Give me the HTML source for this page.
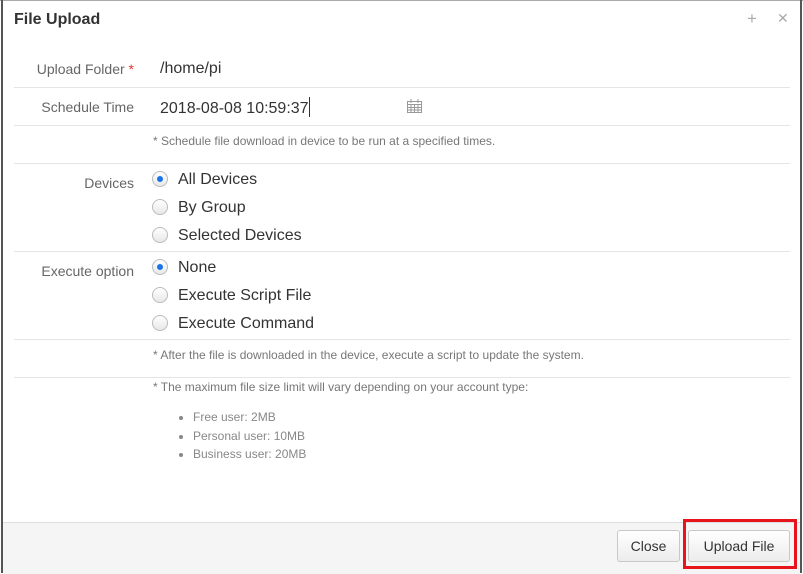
<!DOCTYPE html>
<html><head><style>
body{margin:0;width:803px;height:573px;background:#fff;position:relative;overflow:hidden;font-family:"Liberation Sans",sans-serif}
.a{position:absolute;white-space:nowrap}
.l{position:absolute;right:669px;font-size:14px;color:#666;text-align:right;white-space:nowrap}
.v{position:absolute;left:160px;font-size:16px;color:#333;white-space:nowrap}
.hr{position:absolute;left:14px;width:776px;height:1px;background:#e5e5e5}
.r{position:absolute;left:152px;width:16px;height:16px;border:1px solid #bbb;border-radius:50%;background:linear-gradient(#fff,#e8e8e8);box-sizing:border-box}
.r.on::after{content:"";position:absolute;left:4px;top:4px;width:6px;height:6px;border-radius:50%;background:#1a73e8}
.rt{position:absolute;left:178px;font-size:16px;color:#333;white-space:nowrap}
.n{position:absolute;left:153px;font-size:12px;color:#777;white-space:nowrap}
.li{position:absolute;left:193px;font-size:12px;color:#888;white-space:nowrap}
.li::before{content:"";position:absolute;left:-14px;top:6px;width:4px;height:4px;border-radius:50%;background:#888}
.btn{position:absolute;top:530px;height:32px;border:1px solid #c8c8c8;border-radius:3px;background:linear-gradient(#fff,#ececec);font-size:14px;color:#333;box-sizing:border-box;text-align:center;line-height:30px}
</style></head><body>
<div class="a" style="left:0;top:0;width:803px;height:1px;background:#aaa"></div>
<div class="a" style="left:1px;top:0;width:2px;height:573px;background:#555"></div>
<div class="a" style="left:800px;top:0;width:2px;height:573px;background:#555"></div>
<div class="a" style="left:14px;top:11px;font-size:16px;font-weight:bold;color:#333">File Upload</div>
<div class="a" style="left:747px;top:9px;font-size:17px;color:#aaa">+</div>
<div class="a" style="left:777px;top:10px;font-size:14px;color:#aaa">✕</div>

<div class="l" style="top:61px">Upload Folder <span style="color:#e33">*</span></div>
<div class="v" style="top:60px">/home/pi</div>
<div class="hr" style="top:87px"></div>
<div class="l" style="top:99px">Schedule Time</div>
<div class="v" style="top:97px">2018-08-08 10:59:37<span style="display:inline-block;width:1px;height:20px;background:#333;vertical-align:-4px"></span></div>
<svg class="a" style="left:406px;top:98px" width="17" height="16" viewBox="0 0 17 16"><g fill="none" stroke="#999" stroke-width="1"><rect x="1.5" y="3.5" width="14" height="11"/><path d="M1.5 6.5h14M1.5 9.5h14M1.5 12h14M5 6.5v8M8.5 6.5v8M12 6.5v8M5 1v4M12 1v4"/></g></svg>
<div class="hr" style="top:125px"></div>
<div class="n" style="top:134px">* Schedule file download in device to be run at a specified times.</div>
<div class="hr" style="top:163px"></div>

<div class="l" style="top:175px">Devices</div>
<div class="r on" style="top:171px"></div><div class="rt" style="top:171px">All Devices</div>
<div class="r" style="top:199px"></div><div class="rt" style="top:199px">By Group</div>
<div class="r" style="top:227px"></div><div class="rt" style="top:227px">Selected Devices</div>
<div class="hr" style="top:251px"></div>
<div class="l" style="top:263px">Execute option</div>
<div class="r on" style="top:259px"></div><div class="rt" style="top:259px">None</div>
<div class="r" style="top:287px"></div><div class="rt" style="top:287px">Execute Script File</div>
<div class="r" style="top:315px"></div><div class="rt" style="top:315px">Execute Command</div>
<div class="hr" style="top:339px"></div>
<div class="n" style="top:348px">* After the file is downloaded in the device, execute a script to update the system.</div>
<div class="hr" style="top:377px"></div>
<div class="n" style="top:380px">* The maximum file size limit will vary depending on your account type:</div>
<div class="li" style="top:410px">Free user: 2MB</div>
<div class="li" style="top:429px">Personal user: 10MB</div>
<div class="li" style="top:447px">Business user: 20MB</div>

<div class="a" style="left:3px;top:522px;width:797px;height:51px;background:#f5f5f5;border-top:1px solid #ddd"></div>
<div class="btn" style="left:617px;width:63px">Close</div>
<div class="btn" style="left:688px;width:102px">Upload File</div>
<div class="a" style="left:683px;top:519px;width:114px;height:50px;border:3px solid #e8141c;box-sizing:border-box"></div>
</body></html>
